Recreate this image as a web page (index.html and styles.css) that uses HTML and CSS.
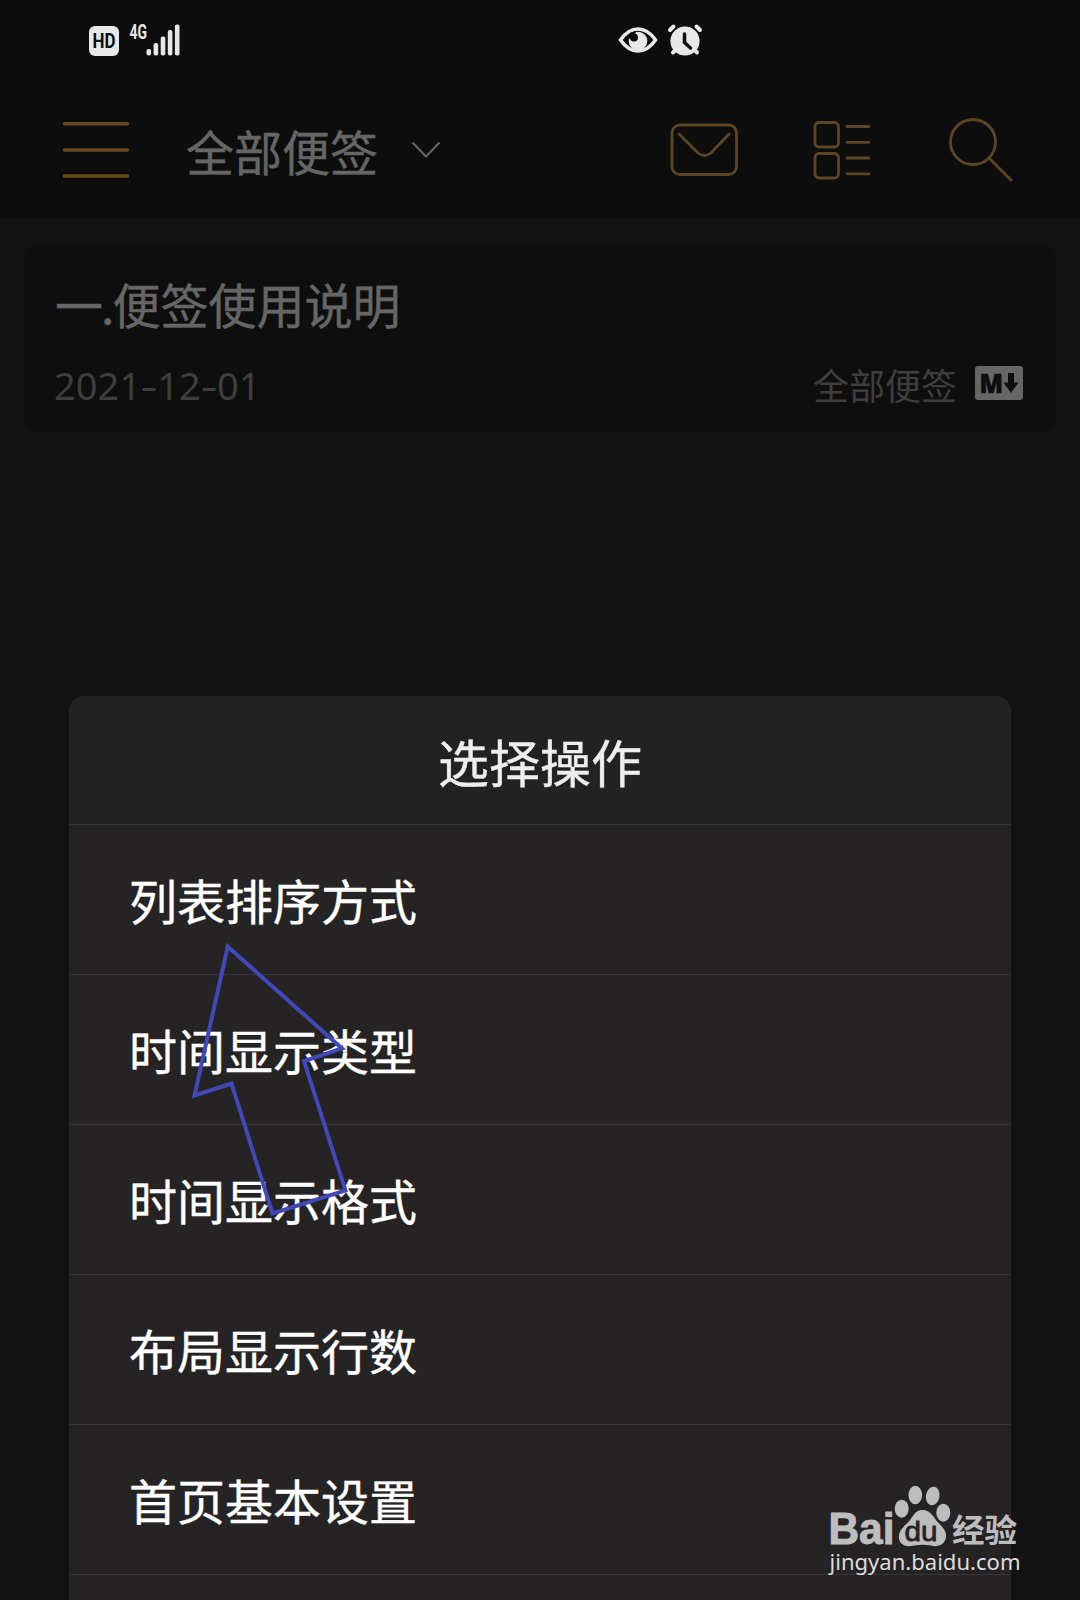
FILE: index.html
```html
<!DOCTYPE html>
<html lang="zh-CN">
<head>
    <meta charset="UTF-8">
    <meta name="viewport" content="width=device-width, initial-scale=1.0">
    <title>便签</title>
    <link rel="stylesheet" href="styles.css">
</head>
<body>
    <header class="top">
        <div class="status-bar">
            <svg class="signal" width="94" height="40" viewBox="0 0 94 40">
                <rect x="0" y="6" width="30" height="30" rx="6"/>
                <text class="hd" x="3.5" y="28" textLength="23" lengthAdjust="spacingAndGlyphs">HD</text>
                <text class="net" x="40.5" y="18.5" textLength="17.5" lengthAdjust="spacingAndGlyphs">4G</text>
                <rect x="57.5" y="29" width="4.6" height="6.5" rx="2"/>
                <rect x="64.6" y="23" width="4.6" height="12.5" rx="2"/>
                <rect x="71.7" y="16.5" width="4.6" height="19" rx="2"/>
                <rect x="78.8" y="10" width="4.6" height="25.5" rx="2"/>
                <rect x="85.9" y="4.5" width="4.6" height="31" rx="2"/>
            </svg>
            <svg class="eye" width="40" height="40" viewBox="0 0 40 40">
                <path class="lid" d="M2.5 20C8 12 14 9 20 9s12 3 17.500 11C32 28 26 31 20 31S8 28 2.500 20z"/>
                <circle cx="20" cy="21" r="9.300"/>
                <circle class="cut" cx="16" cy="17.500" r="4"/>
                <path class="cut" d="M12.500 12.500l6-1.500-2 4-2 3-4 1z"/>
            </svg>
            <svg class="alarm" width="36" height="40" viewBox="0 0 36 40">
                <path class="legs" d="M3 10l3.500-3.500M29.500 6.500L33 10M6 32.500l3-3M27 29.500l3 3"/>
                <circle cx="18" cy="21" r="14.600"/>
                <path class="hands" d="M17.500 14v8.500l6 5.500"/>
            </svg>
        </div>
        <nav class="nav">
            <svg class="icon menu" width="68" height="60" viewBox="0 0 68 60">
                <path d="M2.500 3.700h63M2.500 30h63M2.500 56h63"/>
            </svg>
            <h1>全部便签</h1>
            <svg class="chevron" width="30" height="18" viewBox="0 0 30 18">
                <path d="M1.500 1.500L15 15.500L28.500 1.500"/>
            </svg>
            <svg class="icon mail" width="68" height="54" viewBox="0 0 68 54">
                <rect x="2" y="2" width="64.500" height="49.500" rx="8"/>
                <path d="M9 11l19 19q6.500 5 13 0l18-19"/>
            </svg>
            <svg class="icon list" width="58" height="60" viewBox="0 0 58 60">
                <rect x="2" y="2.500" width="23.500" height="24.500" rx="4"/>
                <rect x="2" y="33.500" width="23.500" height="24.500" rx="4"/>
                <path d="M34 6.500h22M34 22.300h22M34 38h22M34 53.800h22"/>
            </svg>
            <svg class="icon search" width="66" height="66" viewBox="0 0 66 66">
                <circle cx="25" cy="26" r="22.500"/>
                <path d="M41.500 42.500L63 64"/>
            </svg>
        </nav>
    </header>

    <main class="notes">
        <article class="note">
            <h2>一<span class="dot">.</span>便签使用说明</h2>
            <div class="note-meta">
                <time>2021<span class="dash">-</span>12<span class="dash">-</span>01</time>
                <span class="folder">全部便签</span>
                <svg class="markdown" width="48" height="34" viewBox="0 0 48 34">
                    <rect width="48" height="34" rx="3"/>
                    <text x="4.5" y="26.5" textLength="23.5" lengthAdjust="spacingAndGlyphs">M</text>
                    <path d="M33 7h6v9.500h4.500L36 27l-7.500-10.500H33z"/>
                </svg>
            </div>
        </article>
    </main>

    <section class="dialog">
        <h3>选择操作</h3>
        <ul>
            <li>列表排序方式</li>
            <li>时间显示类型</li>
            <li>时间显示格式</li>
            <li>布局显示行数</li>
            <li>首页基本设置</li>
        </ul>
    </section>

    <svg class="pointer" width="160" height="280" viewBox="0 0 160 280">
        <path d="M37.700 6.500L152 108.500L114 121L155.500 250.500L82.500 273.500L41.500 143.500L4.500 155.500Z"/>
    </svg>

    <svg class="watermark" width="200" height="96" viewBox="0 0 200 96">
        <g class="brand">
            <text class="bai" x="4.5" y="60" textLength="66" lengthAdjust="spacingAndGlyphs">Bai</text>
            <ellipse cx="77.700" cy="24.700" rx="7" ry="9"/>
            <ellipse cx="91.300" cy="11" rx="6.800" ry="9.300"/>
            <ellipse cx="108.700" cy="12" rx="6.800" ry="9.300" transform="rotate(10 108.700 12)"/>
            <ellipse cx="119.300" cy="28.700" rx="7" ry="9"/>
            <path d="M98.500 26c8 0 11 7 15 12 6 6 9 9 8.500 15-1 8-9 10.500-15 8.500-6-1-11-1-17 0-7 2-14 0-15-7-1-8 5-12 10-17 4-5 6-11.500 13.500-11.500z"/>
            <text class="du" x="80.5" y="56.500" textLength="33" lengthAdjust="spacingAndGlyphs">du</text>
            <text class="jingyan" x="128" y="58" textLength="65" lengthAdjust="spacingAndGlyphs">经验</text>
        </g>
        <text class="url" x="5.5" y="86" textLength="191" lengthAdjust="spacingAndGlyphs">jingyan.baidu.com</text>
    </svg>
</body>
</html>
```
FILE: styles.css
```css
* {
    box-sizing: border-box;
    margin: 0;
    padding: 0;
}
body {
    position: relative;
    height: 1600px;
    overflow: hidden;
    background: #121212;
    color: #666;
    font-family: "Noto Sans", "Noto Sans CJK SC", sans-serif;
}
h1, h2, h3 {
    font-weight: 400;
}
h1, h2, h3, li {
    font-family: "Noto Sans CJK SC", sans-serif;
    -webkit-text-stroke: 0.4px currentColor;
}
.top {
    height: 219px;
    background: #0d0d0d;
}
.status-bar {
    display: flex;
    padding: 20px 0 0 89px;
    height: 60px;
    fill: #e8e8e8;
}
.hd, .net {
    font-family: Roboto, sans-serif;
    font-weight: 700;
}
.hd {
    font-size: 20px;
    fill: #0d0d0d;
}
.net {
    font-size: 20px;
}
.eye {
    margin-left: 435px;
}
.lid {
    fill: none;
    stroke: #e8e8e8;
    stroke-width: 3.6;
}
.cut {
    fill: #0d0d0d;
}
.alarm {
    margin-left: 9px;
}
.legs, .hands {
    fill: none;
    stroke: #e8e8e8;
    stroke-width: 4;
    stroke-linecap: round;
}
.hands {
    stroke: #0d0d0d;
    stroke-width: 3.5;
}
.nav {
    display: flex;
    align-items: center;
    height: 180px;
    padding: 0 66px 0 62px;
}
.icon {
    fill: none;
    stroke: #5c4624;
    stroke-width: 2.8;
    stroke-linecap: round;
    stroke-linejoin: round;
}
.menu {
    stroke: #674a20;
    stroke-width: 3.6;
}
.nav h1 {
    margin: 0 0 0 56px;
    font-size: 48px;
    line-height: 60px;
}
.chevron {
    margin-left: 33px;
    fill: none;
    stroke: #666;
    stroke-width: 2;
}
.mail {
    margin-left: auto;
}
.list {
    margin: 0 77px 1px 75px;
}
.search {
    margin-bottom: 2px;
}
.notes {
    padding: 24px;
}
.note {
    height: 189px;
    padding: 30px 33px 0 31px;
    border-radius: 16px;
    background: #0e0e0e;
}
.note h2 {
    font-size: 48px;
    line-height: 60px;
}
.dot {
    margin: 0 -1px 0 -2px;
    letter-spacing: -1px;
}
.note-meta {
    display: flex;
    align-items: center;
    height: 48px;
    margin-top: 29px;
    color: #3e3e3e;
}
.note-meta time {
    margin: -2px 0 0 -1px;
    font-size: 38px;
    line-height: 48px;
}
.dash {
    display: inline-block;
    margin: 0 2px;
    transform: scaleX(1.4);
}
.folder {
    margin: -4px 0 0 auto;
    font-family: "Noto Sans CJK SC", sans-serif;
    font-size: 36px;
    line-height: 48px;
}
.markdown {
    margin: -6px 0 0 18px;
    overflow: visible;
    fill: #666;
}
.markdown text {
    font-family: "Open Sans", sans-serif;
    font-size: 26px;
    font-weight: 800;
    stroke: #0e0e0e;
    stroke-width: 0.6;
}
.markdown text, .markdown path {
    fill: #0e0e0e;
}
.dialog {
    position: absolute;
    top: 696px;
    left: 69px;
    width: 942px;
    height: 920px;
    border-radius: 15px;
    overflow: hidden;
    background: #252324;
}
.dialog h3 {
    height: 129px;
    border-bottom: 1px solid #343434;
    background: #222;
    color: #eee;
    font-size: 51px;
    line-height: 130px;
    text-align: center;
}
.dialog li {
    height: 150px;
    padding-left: 60px;
    border-bottom: 1px solid #363435;
    color: #fff;
    font-size: 48px;
    line-height: 148px;
    list-style: none;
}
/* hand-drawn arrow lies over the menu rows */
.pointer {
    position: absolute;
    top: 940px;
    left: 190px;
    fill: none;
    stroke: #4149b8;
    stroke-width: 4;
}
.watermark {
    position: absolute;
    top: 1484px;
    left: 824px;
    overflow: visible;
    fill: #ddd;
}
.brand {
    fill: #bdbdbd;
}
.bai {
    font-family: "Liberation Sans", sans-serif;
    font-size: 44px;
    font-weight: 700;
    stroke: #bdbdbd;
    stroke-width: 1;
}
.du {
    font-family: "Liberation Sans", sans-serif;
    font-size: 28px;
    font-weight: 400;
    fill: #252324;
    stroke: #252324;
    stroke-width: 0.8;
}
.jingyan {
    font-family: "Noto Sans CJK SC", sans-serif;
    font-size: 32px;
    font-weight: 700;
}
.url {
    font-family: "Noto Sans", sans-serif;
    font-size: 22px;
}
```
